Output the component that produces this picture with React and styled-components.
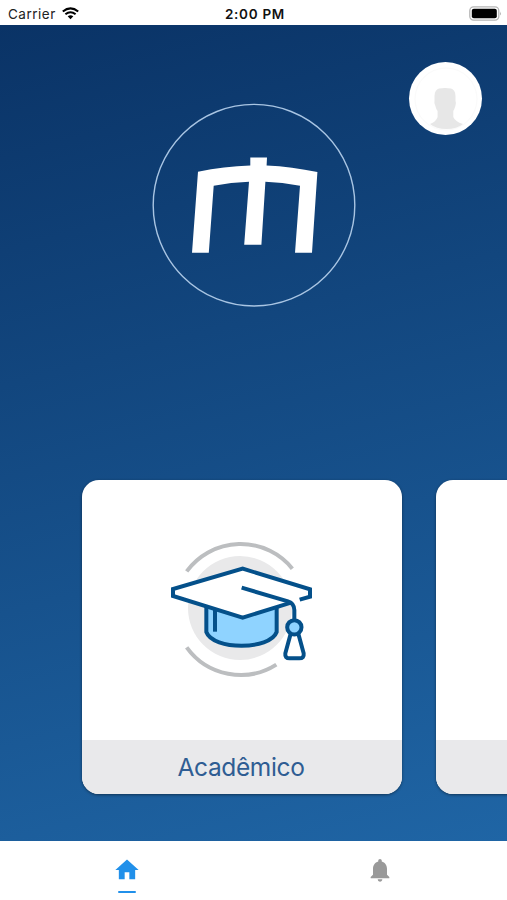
import styled, { createGlobalStyle } from 'styled-components';
import { MdHome, MdNotifications } from 'react-icons/md';

const cards = [
  { id: 'academic', title: 'Acadêmico', icon: <GraduationIcon /> },
  { id: 'next', title: '', icon: null }
];

const App = () => {
  return (
    <StScreen>
      <GlobalStyle />
      <StStatusBar>
        <StCarrier>
          Carrier
          <WifiIcon />
        </StCarrier>
        <StTime>2:00 PM</StTime>
        <StBattery>
          <BatteryIcon />
        </StBattery>
      </StStatusBar>
      <StHome>
        <StHeader>
          <LogoIcon />
          <StAvatar aria-label="Perfil">
            <AvatarIcon />
          </StAvatar>
        </StHeader>
        <StCarousel>
          {cards.map((card) => (
            <StCard key={card.id}>
              <StCardBody>{card.icon}</StCardBody>
              <StCardTitle>{card.title}</StCardTitle>
            </StCard>
          ))}
        </StCarousel>
      </StHome>
      <StTabBar>
        <StTab $active>
          <MdHome size={28} />
        </StTab>
        <StTab>
          <MdNotifications size={28} />
        </StTab>
      </StTabBar>
    </StScreen>
  );
};

export default App;

function WifiIcon() {
  return (
    <svg width="17" height="13" viewBox="0 0 17 13" fill="none" stroke="#000" strokeWidth="2.1">
      <path d="M0.8 4.5 Q8.5 -1.8 16.2 4.5" />
      <path d="M3.4 7.3 Q8.5 3.2 13.6 7.3" />
      <path d="M5.7 9.3 Q8.5 7 11.3 9.3 L8.5 12.2 Z" fill="#000" stroke="none" />
    </svg>
  );
}

function BatteryIcon() {
  return (
    <svg width="33" height="15" viewBox="0 0 33 15">
      <rect x="0.8" y="0.9" width="29" height="13.2" rx="3.8" fill="#fff" stroke="#b5b5b5" strokeWidth="1.3" />
      <rect x="2.8" y="2.8" width="25" height="9.4" rx="2" fill="#000" />
      <path d="M31.2 5.4 Q32.6 7.5 31.2 9.6 Z" fill="#999" />
    </svg>
  );
}

function LogoIcon() {
  return (
    <svg width="204" height="204" viewBox="152 103 204 204">
      <circle cx="254" cy="205.2" r="100.8" fill="none" stroke="#a9c5e3" strokeWidth="1.4" />
      <path
        fill="#fff"
        d="M198 171.8 Q224 166.3 250.3 165.6 V157.4 H267 L266.6 165.4 Q292 166.5 317.4 172 L312 252.7 H295 L300 185.7 Q282 182.2 265.4 181.7 L261.4 244.8 H244.2 L249 181.7 Q231 182.2 213.7 185.7 L208.8 252.7 H192 Z"
      />
    </svg>
  );
}

function AvatarIcon() {
  return (
    <svg width="73" height="73" viewBox="0 0 73 73">
      <circle cx="37" cy="37" r="31" fill="none" stroke="#fafafa" />
      <path
        fill="#e7e7e7"
        d="M30 26.5 Q36 25.6 42 26.5 Q46.5 28 46.5 34 V39 Q47.5 41 46.4 44 Q45.500 47 44.300 49 V55 Q46 59.500 54 62 Q48 67 37.500 67 Q27 67 21 62 Q27 60 28.600 55 V49 Q27 47 26.400 44 Q24.800 41 25.500 39 V34 Q25.500 28 30 26.500 Z"
      />
    </svg>
  );
}

function GraduationIcon() {
  return (
    <svg width="165" height="160" viewBox="0 0 495 480" fill="none" stroke="#04508a" strokeWidth="12">
      <circle cx="240" cy="234" r="156" fill="#e9e9ea" stroke="none" />
      <path d="M80 124 A200 200 0 0 1 397 116" stroke="#bcbec0" />
      <path d="M80 352 A200 200 0 0 0 349 404" stroke="#bcbec0" />
      {/* base of the cap */}
      <path d="M139 225 V306 C159 361 330 361 350 306 V225 Z" fill="#8fd3ff" />
      <path d="M165 236 V305" />
      {/* board, left open where the tassel hangs */}
      <path fill="#fff" stroke="none" d="M39 177 L248 116 L450 178 V200 L248 263 L39 198 Z" />
      <path d="M419 209 L450 200 V178 L248 116 L39 177 V198 L248 263 L393 218" />
      <path d="M245 173 L384 214 Q403 220 403 240 V269" />
      <path d="M392 311 L376 370 Q374 385 389 385 H418 Q433 385 431 370 L415 311 Z" fill="#fff" />
      <circle cx="403" cy="292" r="21.500" fill="#8fd3ff" />
    </svg>
  );
}

const GlobalStyle = createGlobalStyle`
  * {
    box-sizing: border-box;
  }

  body {
    margin: 0;
    font-family: Inter, 'Liberation Sans', sans-serif;
  }

  svg {
    display: block;
  }
`;

const StScreen = styled.div`
  display: flex;
  flex-direction: column;
  width: 100%;
  height: 100vh;
  overflow: hidden;
  background-color: #fff;
`;

const StStatusBar = styled.header`
  display: grid;
  grid-template-columns: 1fr auto 1fr;
  align-items: center;
  height: 25px;
  padding: 2px 5px 0 8px;
  color: #222;
  font-size: 13.5px;
`;

const StCarrier = styled.div`
  display: flex;
  align-items: center;
  gap: 6px;
  letter-spacing: 0.5px;
`;

const StTime = styled.div`
  color: #111;
  font-weight: 600;
  letter-spacing: 0.7px;
`;

const StBattery = styled.div`
  justify-self: end;
`;

const StHome = styled.main`
  flex: 1;
  display: flex;
  flex-direction: column;
  justify-content: space-between;
  padding-bottom: 47px;
  overflow: hidden;
  background: linear-gradient(165deg, #0a3366 0%, #1f65a5 100%);
`;

const StHeader = styled.div`
  position: relative;
  display: flex;
  justify-content: center;
  padding-top: 78px;
`;

const StAvatar = styled.button`
  position: absolute;
  top: 37px;
  right: 25px;
  width: 73px;
  height: 73px;
  padding: 0;
  border: none;
  border-radius: 50%;
  background-color: #fff;
`;

const StCarousel = styled.section`
  display: flex;
  gap: 34px;
  padding-left: 82px;
`;

const StCard = styled.article`
  flex: none;
  display: flex;
  flex-direction: column;
  width: 320px;
  height: 314px;
  border-radius: 17px;
  background-color: #fff;
  box-shadow: 0 1px 3px rgba(0, 0, 0, 0.45);
  overflow: hidden;
`;

const StCardBody = styled.div`
  flex: 1;
  display: flex;
  justify-content: center;
  align-items: center;
`;

const StCardTitle = styled.h2`
  height: 54px;
  margin: 0;
  padding-right: 2px;
  background-color: #e9e9eb;
  color: #2f5d93;
  font-size: 24.5px;
  font-weight: 400;
  letter-spacing: -0.35px;
  line-height: 54px;
  text-align: center;
`;

const StTabBar = styled.nav`
  display: flex;
  height: 59px;
  background-color: #fff;
`;

const StTab = styled.button`
  flex: 1;
  display: flex;
  flex-direction: column;
  align-items: center;
  padding: 15px 0 0;
  border: none;
  background: none;
  color: ${({ $active }) => ($active ? '#2190ea' : '#999')};

  &::after {
    content: '';
    width: 18px;
    height: 2px;
    margin-top: 7px;
    border-radius: 1px;
    background-color: ${({ $active }) => ($active ? '#2190ea' : 'transparent')};
  }
`;
